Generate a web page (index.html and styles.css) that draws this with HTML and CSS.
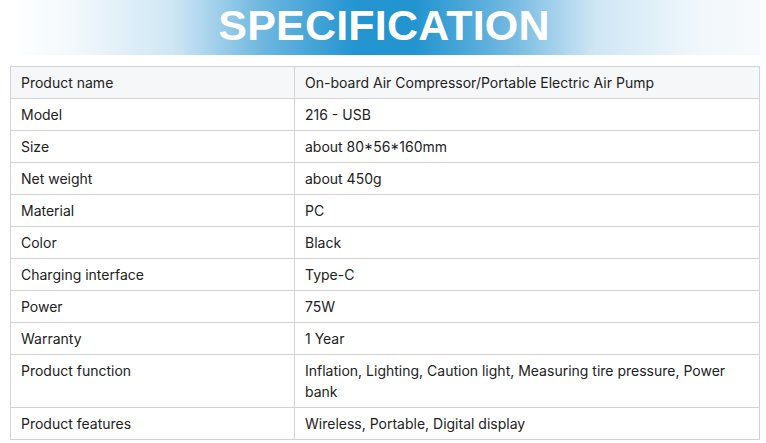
FILE: index.html
```html
<!DOCTYPE html>
<html>
<head>
<meta charset="utf-8">
<link rel="stylesheet" href="styles.css">
</head>
<body>
<div class="banner"><h1 class="title">SPECIFICATION</h1></div>
<div class="wrap">
<table class="spec">
<tr class="head"><td class="k">Product name</td><td>On-board Air Compressor/Portable Electric Air Pump</td></tr>
<tr><td class="k">Model</td><td>216 - USB</td></tr>
<tr><td class="k">Size</td><td>about 80*56*160mm</td></tr>
<tr><td class="k">Net weight</td><td>about 450g</td></tr>
<tr><td class="k">Material</td><td>PC</td></tr>
<tr><td class="k">Color</td><td>Black</td></tr>
<tr><td class="k">Charging interface</td><td>Type-C</td></tr>
<tr><td class="k">Power</td><td>75W</td></tr>
<tr><td class="k">Warranty</td><td>1 Year</td></tr>
<tr><td class="k">Product function</td><td>Inflation, Lighting, Caution light, Measuring tire pressure, Power bank</td></tr>
<tr><td class="k">Product features</td><td>Wireless, Portable, Digital display</td></tr>
</table>
</div>
</body>
</html>
```
FILE: styles.css
```css
html, body { margin: 0; padding: 0; background: #fff; }
body { font-family: Inter, "Noto Sans", sans-serif; color: #222; }
.banner {
  height: 55px;
  margin: 0 6px 0 8px;
  background: linear-gradient(to right, #ffffff 0%, #f4f9fc 8%, #cfe6f4 22%, #6cb6df 34%, #2495d1 46%, #2294d0 54%, #6cb6df 66%, #cfe6f4 78%, #f1f7fb 92%, #f7fafc 100%);
  display: flex;
  justify-content: center;
  align-items: flex-start;
}
.title {
  margin: 0;
  padding-top: 1px;
  font-family: "Liberation Sans", Arial, sans-serif;
  font-weight: bold;
  font-size: 43px;
  line-height: 48px;
  color: #fff;
  letter-spacing: 0.2px;
}
.wrap { padding: 11px 6px 0 10px; }
.spec {
  width: 750px;
  border-collapse: collapse;
  font-size: 14px;
  line-height: 21px;
}
.spec td {
  border: 1px solid #d3d3d3;
  padding: 5px 10px;
  vertical-align: top;
  text-align: left;
}
.spec td.k { width: 263px; }
.spec tr.head td { background: #f6f7f9; }
```
